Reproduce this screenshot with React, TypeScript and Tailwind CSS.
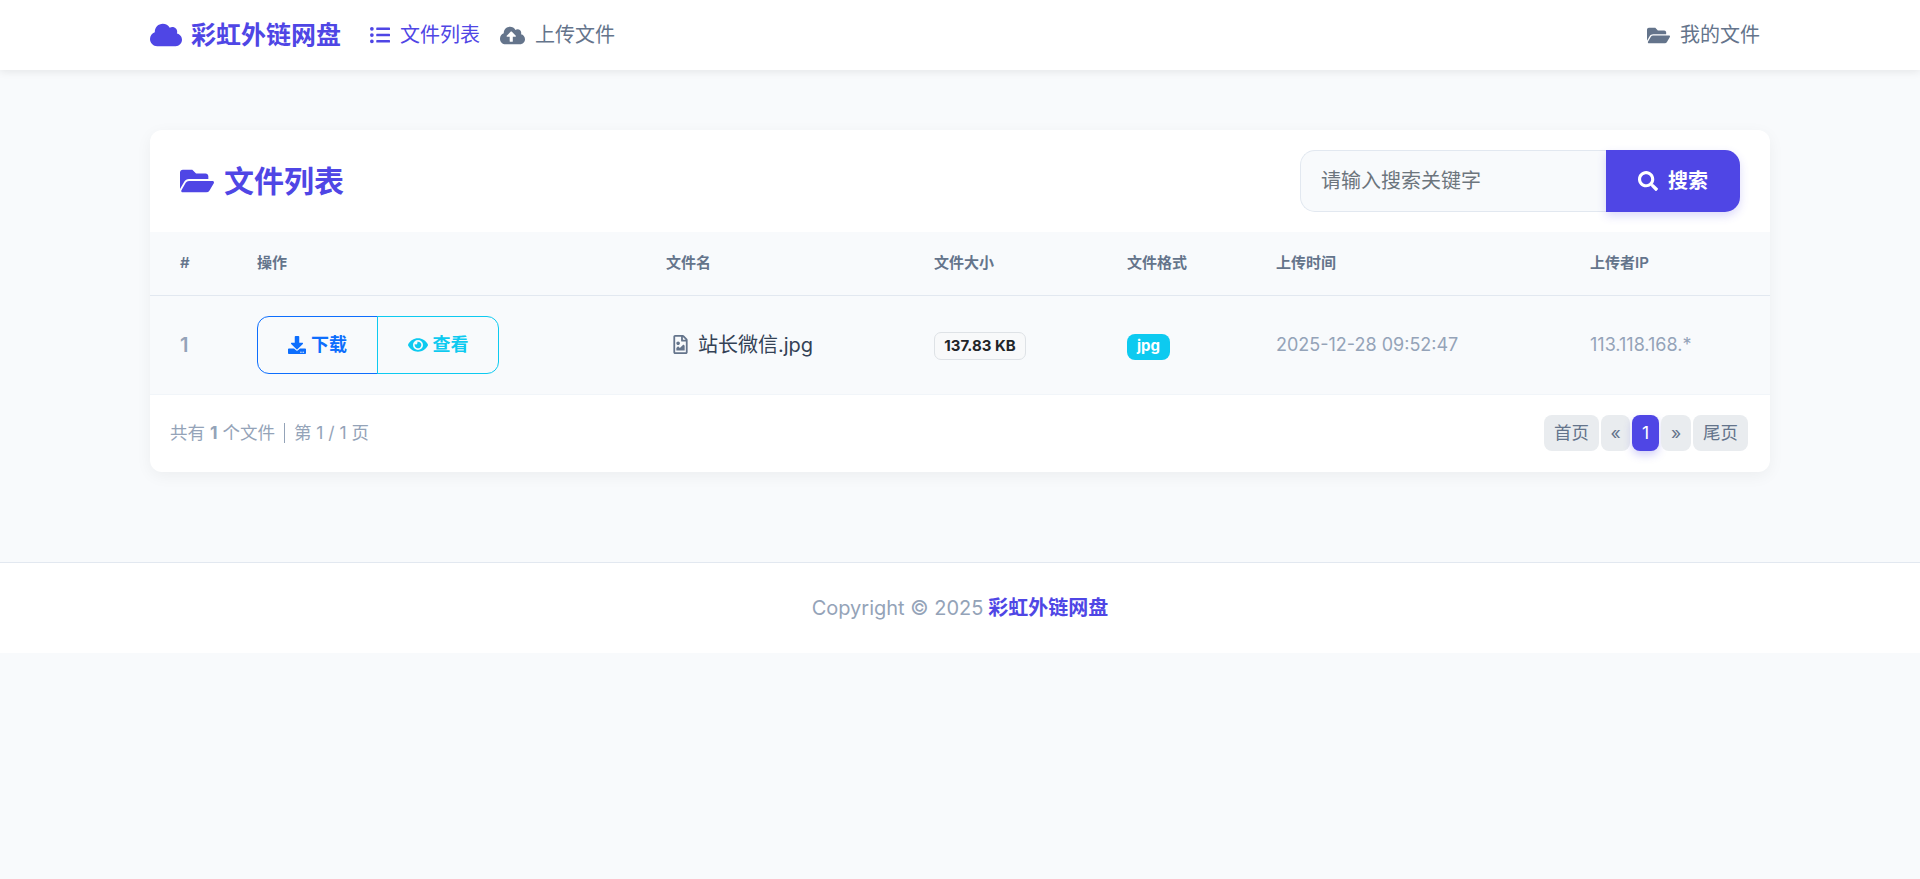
import { FaCloud, FaListUl, FaCloudUploadAlt, FaFolderOpen, FaSearch, FaDownload, FaEye, FaRegFileImage } from "react-icons/fa";

const COLUMNS = [
  { label: "#", width: "w-[77px]" },
  { label: "操作", width: "w-[409px]" },
  { label: "文件名", width: "w-[268px]" },
  { label: "文件大小", width: "w-[193px]" },
  { label: "文件格式", width: "w-[149px]" },
  { label: "上传时间", width: "w-[314px]" },
  { label: "上传者IP", width: "w-[210px]" },
];

const PAGES = [
  { label: "首页", className: "w-[55px] bg-[#e9ecef] text-[#64748b]" },
  { label: "«", className: "w-[29px] bg-[#e9ecef] text-[#64748b]" },
  { label: "1", className: "w-[27px] bg-[#4f46e5] text-white shadow-[0_4px_8px_rgba(79,70,229,0.25)]" },
  { label: "»", className: "w-[30px] bg-[#e9ecef] text-[#64748b]" },
  { label: "尾页", className: "w-[55px] bg-[#e9ecef] text-[#64748b]" },
];

export default function App() {
  return (
    <div className="min-h-[879px] bg-[#f8fafc] font-['Inter','Noto_Sans_CJK_SC',sans-serif] text-[20px] text-[#1e293b]">
      <header className="h-[70px] bg-white shadow-[0_2px_8px_rgba(0,0,0,0.08)] relative">
        <div className="mx-auto flex h-full w-[1620px] items-center">
          <a className="flex items-center text-[#4f46e5] font-bold text-[25px] leading-none">
            <FaCloud className="mr-[9px] text-[32px]" />
            彩虹外链网盘
          </a>
          <nav className="ml-[29px] flex items-center gap-[20px]">
            <a className="flex items-center gap-[10px] text-[#4f46e5]">
              <FaListUl className="text-[20px]" />
              文件列表
            </a>
            <a className="flex items-center gap-[10px] text-[#64748b]">
              <FaCloudUploadAlt className="text-[25px]" />
              上传文件
            </a>
          </nav>
          <a className="ml-auto mr-[10px] flex items-center gap-[10px] text-[#64748b]">
            <FaFolderOpen className="text-[23px]" />
            我的文件
          </a>
        </div>
      </header>

      <main className="mx-auto mt-[60px] w-[1620px] overflow-hidden rounded-[12px] bg-white shadow-[0_4px_16px_rgba(0,0,0,0.05)]">
        <div className="flex h-[102px] items-center justify-between pl-[30px] pr-[30px]">
          <h1 className="flex items-center gap-[10px] text-[30px] font-bold text-[#4f46e5]">
            <FaFolderOpen className="text-[34px]" />
            文件列表
          </h1>
          <div className="flex h-[62px] w-[440px]">
            <div className="flex w-[306px] items-center rounded-l-[15px] border border-r-0 border-[#e2e8f0] bg-[#f8fafc] pl-[20px] text-[#6c757d]">
              请输入搜索关键字
            </div>
            <button className="flex w-[134px] items-center justify-center gap-[10px] rounded-r-[15px] bg-[#4f46e5] font-bold text-white shadow-[0_4px_10px_rgba(79,70,229,0.2)]">
              <FaSearch className="text-[20px]" />
              搜索
            </button>
          </div>
        </div>

        <table className="w-[1620px] table-fixed border-collapse bg-[#f8fafc]">
          <thead>
            <tr className="h-[63px] border-b border-[#e2e8f0]">
              {COLUMNS.map((c) => (
                <th key={c.label} className={`${c.width} px-[30px] text-left text-[15px] font-semibold text-[#64748b]`}>
                  {c.label}
                </th>
              ))}
            </tr>
          </thead>
          <tbody>
            <tr className="h-[99px] border-b border-[#f1f5f9]">
              <td className="px-[30px] font-semibold text-[#94a3b8]">1</td>
              <td className="px-[30px]">
                <div className="flex h-[58px] w-[243px] text-[18px] font-semibold">
                  <a className="flex w-[121px] items-center justify-center gap-[5px] rounded-l-[12px] border border-[#0d6efd] text-[#0d6efd]">
                    <FaDownload className="text-[18px]" />
                    下载
                  </a>
                  <a className="-ml-px flex w-[122px] items-center justify-center gap-[5px] rounded-r-[12px] border border-[#0dcaf0] text-[#0dcaf0]">
                    <FaEye className="text-[20px]" />
                    查看
                  </a>
                </div>
              </td>
              <td className="px-[30px]">
                <span className="flex items-center gap-[8px] pl-[5px] whitespace-nowrap text-[#334155]">
                  <FaRegFileImage className="text-[19px] text-[#64748b]" />
                  站长微信.jpg
                </span>
              </td>
              <td className="px-[30px]">
                <span className="inline-flex h-[28px] w-[92px] items-center justify-center rounded-[7px] border border-[#dee2e6] bg-[#f8f9fa] text-[15px] font-bold text-[#212529]">
                  137.83 KB
                </span>
              </td>
              <td className="px-[30px]">
                <span className="inline-flex h-[26px] w-[43px] items-center justify-center rounded-[8px] bg-[#0dcaf0] text-[15px] font-bold text-white">
                  jpg
                </span>
              </td>
              <td className="px-[30px] text-[18px] text-[#94a3b8] whitespace-nowrap">2025-12-28 09:52:47</td>
              <td className="px-[30px] text-[18px] text-[#94a3b8]">113.118.168.*</td>
            </tr>
          </tbody>
        </table>

        <div className="flex h-[77px] items-center justify-between pl-[20px] pr-[22px] text-[17.5px] text-[#94a3b8]">
          <div className="flex items-center">
            共有&nbsp;<strong className="font-bold">1</strong>&nbsp;个文件
            <span className="mx-[9px] h-[20px] w-px bg-[#94a3b8]" />
            第 1 / 1 页
          </div>
          <div className="flex gap-[2px]">
            {PAGES.map((p) => (
              <a key={p.label} className={`flex h-[36px] items-center justify-center rounded-[8px] ${p.className}`}>
                {p.label}
              </a>
            ))}
          </div>
        </div>
      </main>

      <footer className="mt-[90px] flex h-[91px] items-center justify-center gap-[5px] border-t border-[#e2e8f0] bg-white text-[#94a3b8]">
        Copyright © 2025 <span className="font-bold text-[#4f46e5]">彩虹外链网盘</span>
      </footer>
    </div>
  );
}
